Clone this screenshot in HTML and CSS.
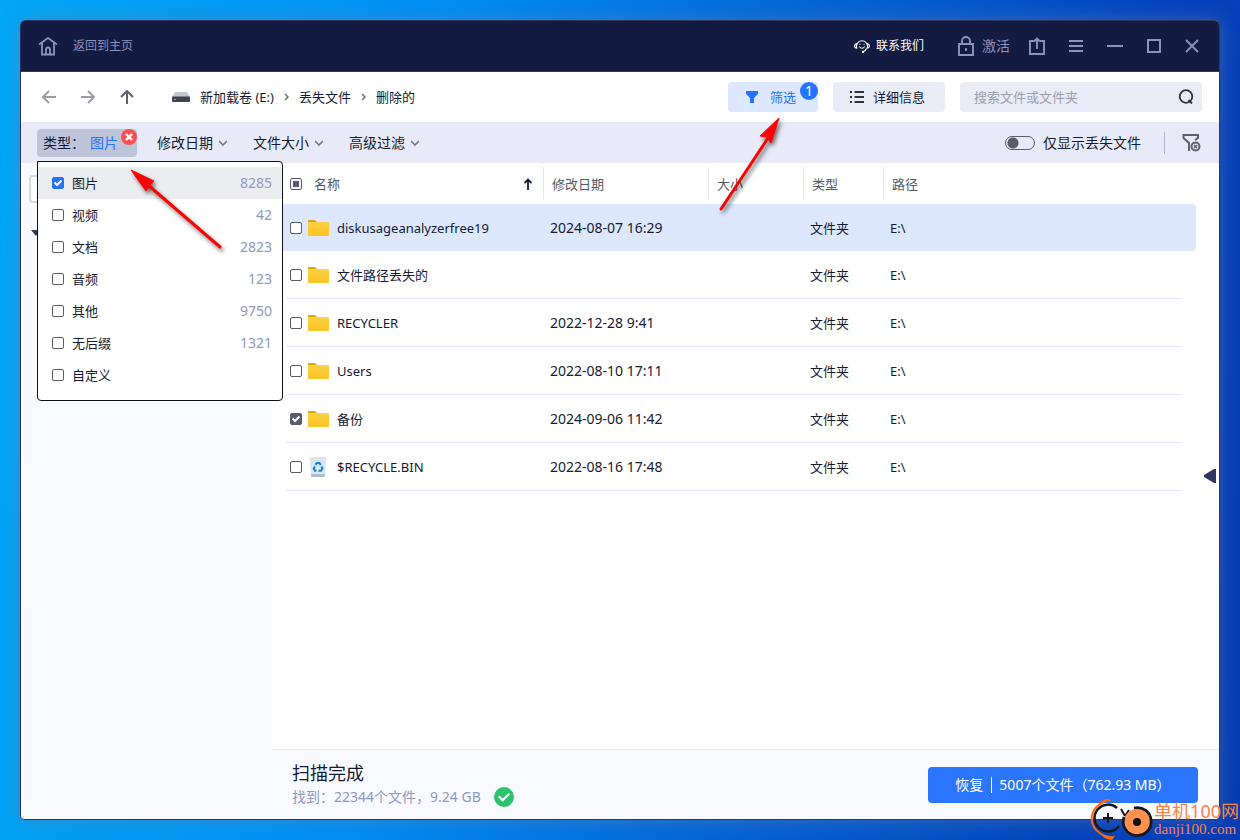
FILE: index.html
```html
<!DOCTYPE html>
<html lang="zh-CN">
<head>
<meta charset="utf-8">
<title>数据恢复</title>
<link rel="stylesheet" href="styles.css">
</head>
<body>
<main class="window">
  <header class="titlebar">
    <a class="home" href="#"><svg width="20" height="19" viewBox="0 0 20 19"><path d="M1 7.500 10 1l9 6.500M4 6v11.500h12V6M8 17v-4.500a2 2 0 0 1 4 0V17" fill="none" stroke="currentColor" stroke-width="1.800"/></svg><span>返回到主页</span></a>
    <a class="contact" href="#"><svg width="16" height="16" viewBox="0 0 16 16" fill="none" stroke="currentColor" stroke-width="1.100"><path d="M3 10.500A5.500 5.500 0 1 1 13 10.500M3 5.500Q.6 6 .6 8T3 10.300M13 5.500q2.400.500 2.400 2.500T13 10.300M12.500 10.500q-1 2.500-3.500 3.200M5.300 8.500q2.700 3.500 5.400 0M6 5.800v1M10 5.800v1"/><circle cx="9" cy="14" r=".6" fill="currentColor"/></svg><span>联系我们</span></a>
    <button class="tb activate"><svg width="16" height="20" viewBox="0 0 16 20" fill="none" stroke="currentColor" stroke-width="1.900"><path d="M1 8h14v11H1zM4 8V5a4 4 0 0 1 8 0v3M8 12v3"/></svg><span>激活</span></button>
    <button class="tb" aria-label="导出"><svg width="16" height="18" viewBox="0 0 16 18" fill="none" stroke="currentColor" stroke-width="1.900"><path d="M5 4H1v13h14V4h-4M8 12V2M5 4.500 8 1.500l3 3"/></svg></button>
    <button class="tb" aria-label="菜单"><svg width="14" height="14" viewBox="0 0 14 14" fill="none" stroke="currentColor" stroke-width="2"><path d="M0 2h14M0 7h14M0 12h14"/></svg></button>
    <button class="tb" aria-label="最小化"><svg width="16" height="14" viewBox="0 0 16 14" fill="none" stroke="currentColor" stroke-width="2"><path d="M0 7h16"/></svg></button>
    <button class="tb" aria-label="最大化"><svg width="14" height="14" viewBox="0 0 14 14" fill="none" stroke="currentColor" stroke-width="2"><path d="M1 1h12v12H1z"/></svg></button>
    <button class="tb" aria-label="关闭"><svg width="14" height="14" viewBox="0 0 14 14" fill="none" stroke="currentColor" stroke-width="1.800"><path d="m1 1 12 12M13 1 1 13"/></svg></button>
  </header>

  <nav class="toolbar">
    <div class="arrows">
      <button class="nav" aria-label="后退"><svg width="14" height="14" viewBox="0 0 14 14"><path d="M14 7H1M7 1 1 7l6 6"/></svg></button>
      <button class="nav" aria-label="前进"><svg width="14" height="14" viewBox="0 0 14 14"><path d="M0 7h13M7 1l6 6-6 6"/></svg></button>
      <button class="nav up" aria-label="向上"><svg width="14" height="14" viewBox="0 0 14 14"><path d="M7 14V1M1 7l6-6 6 6"/></svg></button>
    </div>
    <div class="crumbs">
      <svg class="drive" width="18" height="12" viewBox="0 0 18 12"><path d="M3 1h12l3 5H0z" fill="#c3c7d3"/><rect y="5.500" width="18" height="5.500" rx="1" fill="#3f434e"/><path d="M2 8.500h2" stroke="#39d353"/></svg>
      <a href="#">新加载卷 (E:)</a>
      <svg class="sep" width="5" height="8" viewBox="0 0 5 8"><path d="m1 1 3 3-3 3"/></svg>
      <a href="#">丢失文件</a>
      <svg class="sep" width="5" height="8" viewBox="0 0 5 8"><path d="m1 1 3 3-3 3"/></svg>
      <a href="#">删除的</a>
    </div>
    <button class="pill filter"><svg width="14" height="14" viewBox="0 0 14 14" fill="#2472fd"><path d="M1 1h12v3L9 8v5H5V8L1 4z"/></svg><span>筛选</span><b class="count">1</b></button>
    <button class="pill detail"><svg width="14" height="12" viewBox="0 0 14 12" stroke="#30333f" stroke-width="2"><path d="M0 1h2M0 6h2M0 11h2M4.500 1H14M4.500 6H14M4.500 11H14"/></svg><span>详细信息</span></button>
    <div class="search"><input type="search" aria-label="搜索" placeholder="搜索文件或文件夹"><svg width="16" height="16" viewBox="0 0 16 16" fill="none" stroke="#30333f" stroke-width="1.800"><circle cx="8" cy="7.500" r="6.300"/><path d="m10.500 11 3.500 3.500"/></svg></div>
  </nav>

  <div class="filters">
    <div class="type-filter">
      <button class="chip"><span>类型：</span><em>图片</em></button>
      <button class="clear" aria-label="清除类型"><svg width="16" height="16" viewBox="0 0 16 16"><circle cx="8" cy="8" r="8" fill="#ff4d4f"/><path d="m5 5 6 6m0-6-6 6" stroke="#fff" stroke-width="2.400"/></svg></button>
      <div class="menu">
        <label class="on"><input type="checkbox" checked><span>图片</span><i>8285</i></label>
        <label><input type="checkbox"><span>视频</span><i>42</i></label>
        <label><input type="checkbox"><span>文档</span><i>2823</i></label>
        <label><input type="checkbox"><span>音频</span><i>123</i></label>
        <label><input type="checkbox"><span>其他</span><i>9750</i></label>
        <label><input type="checkbox"><span>无后缀</span><i>1321</i></label>
        <label><input type="checkbox"><span>自定义</span></label>
      </div>
    </div>
    <button class="drop">修改日期<svg width="8" height="6" viewBox="0 0 8 6"><path d="m0 1 4 4 4-4"/></svg></button>
    <button class="drop">文件大小<svg width="8" height="6" viewBox="0 0 8 6"><path d="m0 1 4 4 4-4"/></svg></button>
    <button class="drop">高级过滤<svg width="8" height="6" viewBox="0 0 8 6"><path d="m0 1 4 4 4-4"/></svg></button>
    <label class="lost"><input type="checkbox" class="switch"><span>仅显示丢失文件</span></label>
    <button class="reset" aria-label="清除筛选"><svg width="19" height="18" viewBox="0 0 19 18" fill="none" stroke="#5d606c" stroke-width="2"><path d="M7 17V9L1.500 4V1H16v3l-3 2"/><circle cx="13.500" cy="12.500" r="4"/><path d="m12 11 3 3m0-3-3 3" stroke-width="1.500"/></svg></button>
  </div>

  <div class="content">
    <aside class="side">
      <input class="side-search" type="search" aria-label="搜索目录">
      <svg class="tri" width="10" height="6" viewBox="0 0 10 6"><path d="M0 0h10L5 6z" fill="#2f3760"/></svg>
    </aside>
    <section class="pane">
      <div class="list">
        <table>
          <colgroup><col class="c-name"><col class="c-date"><col class="c-size"><col class="c-type"><col></colgroup>
          <thead><tr>
            <th><div class="cell head"><input type="checkbox" class="mixed" aria-label="全选"><span>名称</span><svg class="sort" width="8" height="12" viewBox="0 0 8 12" fill="none" stroke="#141a3c" stroke-width="1.800"><path d="M4 12V2M.500 5 4 1.500 7.500 5"/></svg></div></th>
            <th>修改日期</th><th>大小</th><th>类型</th><th>路径</th>
          </tr></thead>
          <tbody>
            <tr class="sel"><td><div class="cell"><input type="checkbox" aria-label="diskusageanalyzerfree19"><svg class="fi" width="22" height="18"><use href="#folder"/></svg><span>diskusageanalyzerfree19</span></div></td><td class="date">2024-08-07 16:29</td><td></td><td>文件夹</td><td>E:\</td></tr>
            <tr><td><div class="cell"><input type="checkbox" aria-label="文件路径丢失的"><svg class="fi" width="22" height="18"><use href="#folder"/></svg><span>文件路径丢失的</span></div></td><td></td><td></td><td>文件夹</td><td>E:\</td></tr>
            <tr><td><div class="cell"><input type="checkbox" aria-label="RECYCLER"><svg class="fi" width="22" height="18"><use href="#folder"/></svg><span>RECYCLER</span></div></td><td class="date">2022-12-28 9:41</td><td></td><td>文件夹</td><td>E:\</td></tr>
            <tr><td><div class="cell"><input type="checkbox" aria-label="Users"><svg class="fi" width="22" height="18"><use href="#folder"/></svg><span>Users</span></div></td><td class="date">2022-08-10 17:11</td><td></td><td>文件夹</td><td>E:\</td></tr>
            <tr><td><div class="cell"><input type="checkbox" checked aria-label="备份"><svg class="fi" width="22" height="18"><use href="#folder"/></svg><span>备份</span></div></td><td class="date">2024-09-06 11:42</td><td></td><td>文件夹</td><td>E:\</td></tr>
            <tr><td><div class="cell"><input type="checkbox" aria-label="$RECYCLE.BIN"><svg class="fi" width="22" height="20" viewBox="0 0 22 20"><path d="M2.500 1Q3 0 4.500 0h13Q19 0 19.500 1l-1.500 17H4z" fill="#dbe6ee"/><path d="M4 17h14v2q0 1-1 1H5q-1 0-1-1z" fill="#b3bccb"/><g fill="none" stroke="#1580dc" stroke-width="2"><path d="M8.300 7.800 10 6h2.500l1.200 2M14.500 9.500l1 2-1.500 2.300h-2.500M9.500 13.800H8L6.700 11.500 8 9.500"/></g></svg><span>$RECYCLE.BIN</span></div></td><td class="date">2022-08-16 17:48</td><td></td><td>文件夹</td><td>E:\</td></tr>
          </tbody>
        </table>
        <button class="expand" aria-label="展开预览"><svg width="12" height="14" viewBox="0 0 12 14"><path d="M12 0v14h-2L0 8V6l10-6z" fill="#2f3760"/></svg></button>
      </div>
      <footer class="status">
        <div class="done"><h1>扫描完成</h1><p>找到：22344个文件，9.24 GB</p></div>
        <svg class="ok" width="20" height="20" viewBox="0 0 20 20"><circle cx="10" cy="10" r="10" fill="#2bc46c"/><path d="m5.500 10 3.200 3.300 6-6" fill="none" stroke="#fff" stroke-width="2.200" stroke-linecap="round"/></svg>
        <button class="recover"><span>恢复</span><span class="amount">5007个文件（762.93 MB）</span></button>
      </footer>
    </section>
  </div>
</main>

<svg class="pointer one" width="112" height="100" viewBox="0 0 112 100"><path d="M99 87 27 25" stroke="#f00" stroke-width="3" stroke-linecap="round"/><path d="m10 10 23 11-5 5-3 5z" fill="#f00" stroke="#f00"/></svg>
<svg class="pointer two" width="84" height="120" viewBox="0 0 84 120"><path d="M11 98 60 24" stroke="#f00" stroke-width="3" stroke-linecap="round"/><path d="M69 7 50 25l7 1 4 6z" fill="#f00" stroke="#f00"/></svg>

<div class="mark">
  <svg width="64" height="44" viewBox="0 0 64 44" fill="none"><path d="M17 4Q6 8 3 18q-2 12 9 19" stroke="#f96a10" stroke-width="2"/><path d="M8 9Q13 1 20 2l2 2Q15 4 8 9zM9 34q7 6 17 5l-3 4Q15 43 9 34z" fill="#f96a10"/><path d="M28 11A13.500 13.500 0 1 0 30 29" stroke="#17181d" stroke-width="2.500"/><path d="M19 16v10M14 21h10M32 12l4 7M40 13l-4 6" stroke="#17181d" stroke-width="2"/><circle cx="48" cy="25" r="13" fill="#ff914b"/><path d="M45 11a14 14 0 1 1-10 9" stroke="#17181d" stroke-width="2.800"/><circle cx="48" cy="25" r="4" fill="#111"/></svg>
  <div><strong>单机100网</strong><span>danji100.com</span></div>
</div>

<svg width="0" height="0" class="defs"><defs><linearGradient id="fg" x2="0" y2="1"><stop stop-color="#fdd043"/><stop offset="1" stop-color="#ffc327"/></linearGradient><symbol id="folder" viewBox="0 0 22 18"><path d="M1 2q0-1 1-1h6l2 2v3H1z" fill="#d9a514"/><rect x="1" y="3" width="21" height="14" rx="1" fill="url(#fg)"/></symbol></defs></svg>
</body>
</html>
```
FILE: styles.css
```css
* { box-sizing: border-box; }
body {
  margin: 0; min-height: 100vh; padding: 20px; display: flex; position: relative; overflow: hidden;
  background: linear-gradient(97deg, #00a8f6 0%, #0090f4 32%, #0464d4 62%, #0444bd 88%, #043cb4 100%);
  font: 13px/20px "Noto Sans", "Noto Sans CJK SC", sans-serif; color: #141a33;
}
button, input { font: inherit; color: inherit; }
button { border: 0; background: none; padding: 0; margin: 0; display: flex; align-items: center; }
a { color: inherit; text-decoration: none; }
svg { flex: none; display: block; }
.defs { position: absolute; }
input[type=checkbox] {
  appearance: none; flex: none; width: 12px; height: 12px; margin: 0;
  border: 1px solid #5a5d69; border-radius: 2px; background: #fff center no-repeat;
}
input[type=checkbox]:checked {
  background-color: #5a5d69;
  background-image: url('data:image/svg+xml,<svg xmlns="http://www.w3.org/2000/svg" width="10" height="10"><path d="M1.500 4.500 4 7l4.500-4.500" fill="none" stroke="white" stroke-width="2"/></svg>');
}

.window { flex: 1; min-width: 0; display: flex; flex-direction: column; background: #fff; border: 1px solid #2f355f; border-radius: 5px; box-shadow: 0 0 18px rgba(110, 125, 160, .5); }
.titlebar { height: 51px; flex: none; display: flex; align-items: center; gap: 24px; padding: 0 20px 0 17px; background: #141b40; color: #8b93be; border-radius: 4px 4px 0 0; border-bottom: 1px solid #30365f; }
.home { display: flex; align-items: center; gap: 15px; font-size: 12px; margin-right: auto; }
.contact { display: flex; align-items: center; gap: 6px; font-size: 12px; color: #fff; margin-right: 10px; }
.activate { gap: 8px; font-size: 14px; margin-right: -5px; }

.toolbar { height: 50px; flex: none; display: flex; align-items: center; padding: 0 17px 0 21px; }
.arrows { display: flex; gap: 25px; }
.nav { color: #9b9ca6; }
.nav.up { color: #5d5f6d; }
.nav path { fill: none; stroke: currentColor; stroke-width: 2; }
.crumbs { display: flex; align-items: center; gap: 10px; margin-left: 38px; margin-right: auto; }
.sep path, .drop path { fill: none; stroke: #6c6f7a; stroke-width: 1.5; }
.pill { position: relative; height: 30px; border-radius: 4px; }
.filter { width: 90px; padding-left: 17px; gap: 11px; background: #dce8ff; color: #2472fd; }
.count { position: absolute; right: 0; top: 0; width: 18px; height: 18px; border-radius: 9px; background: #2472fd; color: #fff; font-size: 14px; font-weight: 400; line-height: 18px; text-align: center; }
.detail { width: 112px; margin: 0 15px; padding-left: 17px; gap: 9px; background: #e9ecf7; }
.search { width: 242px; height: 30px; display: flex; align-items: center; padding: 0 8px 0 14px; border-radius: 4px; background: #e9ecf7; }
.search input { flex: 1; min-width: 0; padding: 0; border: 0; background: none; outline: 0; }
.search input::placeholder { color: #9b9eaa; }

.filters { height: 41px; flex: none; display: flex; align-items: center; padding: 0 18px 0 16px; background: #e8ebf7; font-size: 14px; }
.type-filter { position: relative; width: 100px; margin-right: 20px; }
.chip { width: 100%; height: 28px; padding-left: 6px; border-radius: 4px; background: #bec4d9; }
.chip span { width: 47px; text-align: left; }
.chip em { font-style: normal; color: #2472fd; }
.clear { position: absolute; right: 0; top: 0; }
.menu { position: absolute; z-index: 2; left: 0; top: 32px; width: 246px; padding: 5px 0 9px; background: #fff; border: 1px solid #111; border-radius: 0 4px 4px 4px; font-size: 13px; }
.menu label { height: 32px; display: flex; align-items: center; gap: 8px; padding: 0 10px 0 14px; }
.menu .on { background: #ecedf1; }
.menu .on input { background-color: #2472fd; border-color: #2472fd; }
.menu i { margin-left: auto; font-size: 14px; font-style: normal; color: #8f97c0; }
.drop { gap: 6px; margin-right: 26px; }
.lost { display: flex; align-items: center; gap: 8px; margin-left: auto; padding-right: 23px; }
.lost input.switch { width: 30px; height: 14px; border-radius: 7px; background: radial-gradient(circle at 7px 6px, #5a5d69 5px, #fff0 6px); }
.reset { height: 22px; padding-left: 17px; border-left: 1px solid #b3b6c4; }

.content { flex: 1; min-height: 0; display: flex; }
.side { width: 251px; flex: none; padding: 12px 8px; background: #f9faff; border-radius: 0 0 0 4px; }
.side-search { display: block; width: 100%; height: 28px; border: 2px solid #d5d8e6; border-radius: 4px; background: #fff; }
.tri { margin: 27px 2px; }
.pane { flex: 1; min-width: 0; display: flex; flex-direction: column; }
.list { flex: 1; position: relative; padding-right: 23px; }
table { width: 100%; table-layout: fixed; border-collapse: separate; border-spacing: 0; }
.c-name { width: 272px; } .c-date { width: 165px; } .c-size { width: 95px; } .c-type { width: 80px; }
th { height: 41px; padding: 0 0 0 8px; font-weight: 400; text-align: left; color: #555865; background: linear-gradient(#dfe9ee, #dfe9ee) right 4px / 1px 32px no-repeat; }
th:last-child { background: none; }
td { height: 48px; padding: 0 0 0 6px; }
th:first-child, td:first-child { padding-left: 18px; }
tbody tr { background: linear-gradient(#dfe5f7, #dfe5f7) 14px 100% / calc(100% - 28px) 1px no-repeat; }
tbody tr.sel { background: none; }
.sel td { height: 47px; background: #dde8fe; }
.sel td:last-child { border-radius: 0 4px 4px 0; }
.cell { display: flex; align-items: center; }
.fi { margin: 0 8px 0 5px; }
.head span { margin-left: 12px; }
.sort { margin-left: auto; margin-right: 12px; }
.date { font-size: 14px; }
input.mixed[type=checkbox] { background-image: linear-gradient(#5a5d69, #5a5d69); background-size: 6px 6px; }
.expand { position: absolute; right: 3px; top: 306px; }
.status { display: flex; align-items: center; min-height: 70px; padding: 0 21px 0 20px; background: #f9faff; border-top: 1px solid #e2eaf0; border-radius: 0 0 4px 0; }
.done h1 { margin: 0; font-size: 18px; line-height: 24px; font-weight: 400; }
.done p { margin: 0; font-size: 14px; line-height: 24px; color: #8f97c0; }
.ok { margin: 24px 0 0 13px; }
.recover { width: 270px; height: 36px; margin-left: auto; justify-content: center; border-radius: 4px; background: #2b76ff; color: #fff; font-size: 14px; line-height: 16px; }
.amount { margin-left: 8px; padding-left: 7px; border-left: 1px solid #fff; }

.pointer { position: absolute; z-index: 5; fill: none; filter: drop-shadow(2px 3px 2px rgba(0, 0, 0, .55)); }
.one { left: 121px; top: 160px; }
.two { left: 710px; top: 111px; }
.mark { position: absolute; z-index: 6; right: 1px; bottom: -1px; display: flex; align-items: center; gap: 1px; color: #f98345; }
.mark strong { display: block; font-size: 18px; line-height: 20px; font-weight: 400; }
.mark span { display: block; font: 15px/16px "Liberation Serif", serif; }
```
